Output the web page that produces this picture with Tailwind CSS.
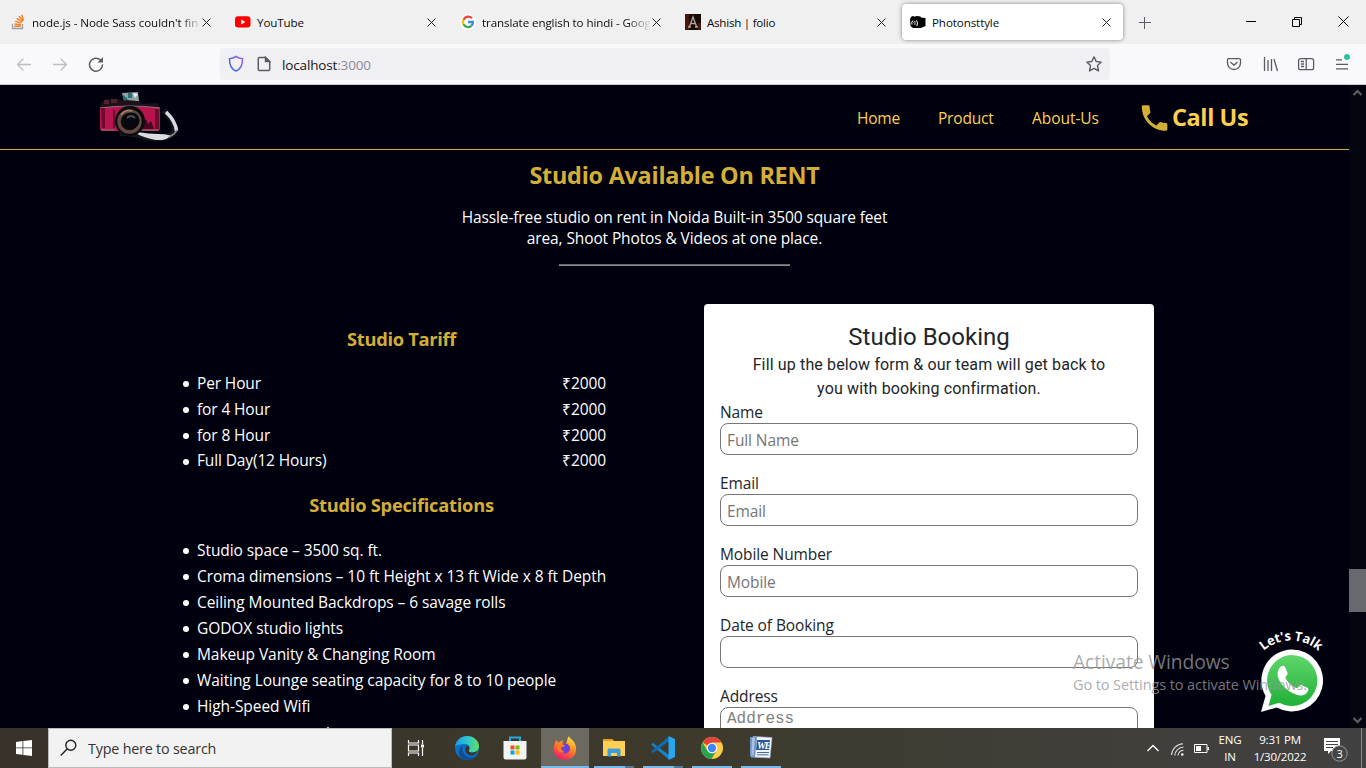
<!DOCTYPE html>
<html lang="en">
<head>
<meta charset="utf-8">
<title>Photonsttyle</title>
<script src="https://cdn.jsdelivr.net/npm/@tailwindcss/browser@4"></script>
</head>
<body class="w-[1366px] h-[768px] overflow-hidden flex flex-col font-['Open_Sans',sans-serif] text-[15.5px] bg-[#00000f]">

<!-- Tab strip -->
<div class="h-[44px] shrink-0 bg-[#f0f0f0] flex pl-[2px] text-[11.6px] text-[#0c0c0d] relative">
  <div class="w-[225px] h-[44px] flex items-center pl-[9px] shrink-0">
    <svg class="w-4 h-4 shrink-0" viewBox="0 0 16 16" fill="none"><path d="M1.5 10v4.5h10V10" stroke="#9aa0a8" stroke-width="1.3"/><path d="M3.3 12.3h6.5M3.5 10l6.4.8M4.2 7.2l6 2M5.8 4.4l5.2 3.6M8 2.2l4 5M10.8.8l1.6 6" stroke="#f48024" stroke-width="1.4"/></svg>
    <div class="ml-[5px] pt-[1px] w-[169px] overflow-hidden whitespace-nowrap tracking-[-0.070px] [mask-image:linear-gradient(to_right,black_148px,transparent_170px)]">node.js - Node Sass couldn't fin</div>
    <svg class="w-[9px] h-[9px] ml-[1px] shrink-0" viewBox="0 0 9 9" stroke="#222" fill="none"><path d="M.5.5l8 8M8.500.5l-8 8"/></svg>
  </div>
  <div class="w-[225px] h-[44px] flex items-center pl-[8px] shrink-0">
    <svg class="w-4 h-4 shrink-0" viewBox="0 0 16 16"><rect x="0" y="2.200" width="15.500" height="11.300" rx="3" fill="#f00"/><path d="M6.200 5.400v5l4.200-2.500z" fill="#fff"/></svg>
    <div class="ml-[6px] pt-[1px] w-[169px] whitespace-nowrap tracking-[-0.1px]">YouTube</div>
    <svg class="w-[9px] h-[9px] ml-[1px] shrink-0" viewBox="0 0 9 9" stroke="#222" fill="none"><path d="M.5.5l8 8M8.500.5l-8 8"/></svg>
  </div>
  <div class="w-[225px] h-[44px] flex items-center pl-[8px] shrink-0">
    <svg class="w-4 h-4 shrink-0" viewBox="0 0 16 16"><circle cx="8" cy="8" r="8" fill="#fff"/><g fill="none" stroke-width="2.300"><path d="M12 4.300A5.100 5.100 0 0 0 3.500 5.700" stroke="#ea4335"/><path d="M3.500 5.600a5.100 5.100 0 0 0 0 4.800" stroke="#fbbc05"/><path d="M3.500 10.300a5.100 5.100 0 0 0 7.900 1.500" stroke="#34a853"/><path d="M11.300 11.900A5 5 0 0 0 13 8H8" stroke="#4285f4"/></g></svg>
    <div class="ml-[6px] pt-[1px] w-[169px] overflow-hidden whitespace-nowrap tracking-[-0.1px] [mask-image:linear-gradient(to_right,black_145px,transparent_170px)]">translate english to hindi - Goog</div>
    <svg class="w-[9px] h-[9px] ml-[1px] shrink-0" viewBox="0 0 9 9" stroke="#222" fill="none"><path d="M.5.5l8 8M8.500.5l-8 8"/></svg>
  </div>
  <div class="w-[225px] h-[44px] flex items-center pl-[8px] shrink-0">
    <svg class="w-4 h-4 shrink-0" viewBox="0 0 16 16" fill="none"><path fill="#180a05" d="M0 0h16v16H0z"/><path d="M0 0h4v16H0zM13 9h3v7h-3z" fill="#461b0b"/><path d="M3 13h3M10 13h3M4.500 12.500L8 3l3.500 9.500M6 9.500h4.500" stroke="#b1a59c" stroke-width="1.300"/></svg>
    <div class="ml-[6px] pt-[1px] w-[169px] whitespace-nowrap tracking-[-0.25px]">Ashish | folio</div>
    <svg class="w-[9px] h-[9px] ml-[1px] shrink-0" viewBox="0 0 9 9" stroke="#222" fill="none"><path d="M.5.5l8 8M8.500.5l-8 8"/></svg>
  </div>
  <div class="w-[221px] h-[36px] mt-[4px] flex items-center pl-[8px] shrink-0 bg-white rounded-[4px] shadow-[0_0_4px_rgba(0,0,0,0.45)]">
    <svg class="w-4 h-4 shrink-0" viewBox="0 0 16 16"><path d="M0 5l1.500-2.500 2-.5 1 .8L6.500 2l4 .5.500 1 4.500.5v8L11 14H3L.5 12z" fill="#000"/><path d="M3 6.500q-2 1.500-1 4M6.500 6.300q2 2.700.3 5.700" stroke="#fff" stroke-width="1" fill="none"/><path d="M3.500 8.500l1.500-1v3.500" stroke="#ddd" stroke-width=".9" fill="none"/></svg>
    <div class="ml-[6px] pt-[1px] w-[169px] whitespace-nowrap tracking-[-0.1px]">Photonsttyle</div>
    <svg class="w-[9px] h-[9px] ml-[1px] shrink-0" viewBox="0 0 9 9" stroke="#222" fill="none"><path d="M.5.5l8 8M8.500.5l-8 8"/></svg>
  </div>
  <svg class="w-[12px] h-[12px] mt-[17px] ml-[16px] shrink-0" viewBox="0 0 12 12" stroke="#5b5b66" fill="none"><path d="M0 5.500h12M5.500 0v12"/></svg>
  <svg class="w-[104px] h-[12px] mt-[16px] ml-[95px] shrink-0" viewBox="0 0 104 12" stroke="#000" fill="none"><path d="M0 5.500h10M46.500 3.500h7v7h-7zM48.500 3.500v-2h7v7h-2M92.500.5l10 10M102.500.5l-10 10"/></svg>
</div>

<!-- Toolbar -->
<div class="h-[41px] shrink-0 bg-[#f9f9fb] border-b border-[#ccccd1] flex items-center">
  <svg class="w-[96px] h-[16px] ml-[16px] shrink-0" viewBox="0 0 96 16" fill="none" stroke-width="1.300" stroke-linecap="round" stroke-linejoin="round"><path d="M14.500 8.500H1.500M7 3L1.500 8.500 7 14M37.500 8.500h13M45 3l5.500 5.500L45 14" stroke="#bdbdc2"/><path d="M86.500 9a6.500 6.500 0 1 1-2-5" stroke="#5b5b66" stroke-width="1.500"/><path d="M87 1v5.500h-5.500z" fill="#5b5b66"/></svg>
  <div class="ml-[108px] w-[890px] h-[32px] rounded-[4px] bg-[#f0f0f4] flex items-center shrink-0">
    <svg class="w-[16px] h-[18px] ml-[8px]" viewBox="0 0 16 18" fill="none"><defs><linearGradient id="sh" x1="0" y1="1" x2="1" y2="0"><stop stop-color="#2a6cd8"/><stop offset="1" stop-color="#a060f0"/></linearGradient></defs><path d="M8 1.500c2 1.300 4 2 6.500 2.200.2 6-1.500 10.300-6.500 12.300C3 14 1.300 9.700 1.500 3.700 4 3.500 6 2.800 8 1.500z" stroke="url(#sh)" stroke-width="1.500"/></svg>
    <svg class="w-[14px] h-[16px] ml-[13px]" viewBox="0 0 14 16" fill="none" stroke="#5b5b66" stroke-width="1.500"><path d="M8.500 1.500h-6q-1.200 0-1.200 1.200v10.600q0 1.200 1.200 1.200h9q1.200 0 1.200-1.200V5.500z"/><path d="M8.500 1.500v4h4z" fill="#5b5b66"/></svg>
    <div class="ml-[11px] pt-[2px] text-[13.500px] tracking-[-0.15px] text-[#15141a] w-[804px]">localhost<span class="text-[#8a8a92]">:3000</span></div>
    <svg class="w-[16px] h-[16px] shrink-0" viewBox="0 0 16 16" fill="none" stroke="#5b5b66" stroke-width="1.400" stroke-linejoin="round"><path d="M8 .8l2.200 4.700 5 .6-3.700 3.500 1 5.300L8 12.400l-4.500 2.500 1-5.300L.8 6.100l5-.6z"/></svg>
  </div>
  <svg class="w-[124px] h-[20px] ml-[116px] mb-[2px] shrink-0" viewBox="0 0 124 20" fill="none" stroke="#5b5b66" stroke-width="1.300"><path d="M2.500 5.700h11q1 0 1 1V10a6.500 6.500 0 0 1-13 0V6.700q0-1 1-1zM4.500 9L8 12.200 11.500 9" stroke-linejoin="round"/><path d="M38.500 4v14M42 7v11M45.500 6v12M48 6l3.500 12"/><rect x="72.600" y="5.700" width="15" height="11" rx="2"/><path d="M80.200 6v11M75 8.500h3M75 11h3M75 13.500h3M110 6.800h6M110 11.300h12M110 15.800h12"/><circle cx="121" cy="4" r="3" fill="#2ac3a2" stroke="none"/></svg>
</div>

<!-- Web page -->
<div class="h-[643px] shrink-0 flex overflow-hidden relative">
  <div class="w-[1349px] h-full flex flex-col text-white">
    <header class="h-[65px] shrink-0 border-b border-[#d4af37] flex text-[#ffcf50]">
      <svg class="w-[84px] h-[54px] ml-[97px] mt-[5px]" viewBox="0 0 84 54"><path d="M67 20q8 8 11 18 0 7-9 9-8 3-20 0-14-4-26-4" fill="none" stroke="#15151c" stroke-width="6"/><path d="M69 22q9.500 9 10.500 19" fill="none" stroke="#d9dde0" stroke-width="3.500"/><path d="M72 46q-4 4-13 3-9-1-19-6 12 2 22 2 6 0 10 1z" fill="#d9dde0" stroke="#d9dde0" stroke-width="1.800"/><path d="M80 40l-3 4-5 3" stroke="#8d9298" stroke-width="1.500" fill="none"/><path d="M25 3l16-1 1 9-14 2z" fill="#8da3a4"/><path d="M25 4l6 5-4 3zM31 3h4v5h-4z" fill="#2a706f"/><path d="M36 3l5 1-3 4z" fill="#eef"/><path d="M4 13l5-4h12l4 2 5-1 10 1 6 3 15-1 1 5H3z" fill="#20101a"/><path d="M7 10h5v4H7zM14 9h6v4h-6z" fill="#4d242b"/><rect x="3" y="17" width="60" height="24" rx="3" fill="#b8134d"/><path d="M3 18q30-4 60 0" stroke="#8b7681" fill="none"/><path d="M4 18h4v20H5zM58 19h4v20h-4zM16 20h2v18h-2z" fill="#6d0c2d"/><path d="M46 33l3-4 2 5 3-3 3 8H44z" fill="#450820"/><path d="M4 40h14M45 40h17" stroke="#9a5563" stroke-width="1.500"/><circle cx="33" cy="31" r="15" fill="#0c0a10"/><circle cx="32.500" cy="31.500" r="10.500" fill="none" stroke="#634a3e" stroke-width="3.500"/><path d="M24 25q4-6 11-4" stroke="#a3816e" stroke-width="1.500" fill="none"/><circle cx="34.500" cy="30.500" r="8" fill="#07070e"/><path d="M30 28q4-4 8 0" stroke="#4b4c56" stroke-width="2" fill="none"/></svg>
      <nav class="ml-[676px] h-[68px] flex items-center">
        <a class="w-[81px] whitespace-nowrap tracking-[-0.2px]">Home</a>
        <a class="w-[94px] whitespace-nowrap tracking-[-0.2px]">Product</a>
        <a class="w-[107px] whitespace-nowrap tracking-[-0.05px]">About-Us</a>
      </nav>
      <svg class="w-[34px] h-[34px] mt-[15.500px] shrink-0" viewBox="0 0 24 24" fill="#d4af37"><path transform="translate(-1 0)" d="M6.620 10.790c1.440 2.830 3.760 5.140 6.590 6.590l2.200-2.200c.27-.27.67-.36 1.020-.24 1.120.37 2.330.57 3.570.57.55 0 1 .45 1 1V20c0 .55-.45 1-1 1-9.390 0-17-7.610-17-17 0-.55.45-1 1-1h3.500c.55 0 1 .45 1 1 0 1.250.2 2.450.57 3.570.11.35.03.74-.25 1.020l-2.200 2.200z"/></svg>
      <div class="-ml-[1px] h-[65px] flex items-center font-bold text-[23.500px] tracking-[-0.4px] whitespace-nowrap">Call Us</div>
    </header>

    <section class="flex flex-col items-center">
      <h1 class="mt-[8px] h-[34px] leading-[34px] font-bold text-[23.400px] tracking-[-0.240px] text-[#d4af37] whitespace-nowrap">Studio Available On RENT</h1>
      <p class="mt-[15px] text-center leading-[21px] tracking-[-0.120px] whitespace-nowrap">Hassle-free studio on rent in Noida Built-in 3500 square feet<br>area, Shoot Photos &amp; Videos at one place.</p>
      <div class="mt-[15px] w-[231px] h-[2px] border-t border-[#6a6a6a] bg-[#8c8c8c]"></div>
    </section>

    <div class="flex mt-[38px]">
      <section class="ml-[183px] w-[423px] shrink-0">
        <h3 class="mt-[22px] ml-[14px] h-[26px] leading-[26px] text-center font-bold text-[18.300px] tracking-[-0.310px] text-[#d4af37]">Studio Tariff</h3>
        <ul class="mt-[19px] leading-[25.800px] tracking-[-0.130px]">
          <li class="flex items-center gap-[8px]"><span class="w-[6px] h-[6px] mt-px rounded-full bg-white"></span><span class="grow">Per Hour</span><span class="tracking-[-0.1px]">₹2000</span></li>
          <li class="flex items-center gap-[8px]"><span class="w-[6px] h-[6px] mt-px rounded-full bg-white"></span><span class="grow">for 4 Hour</span><span class="tracking-[-0.1px]">₹2000</span></li>
          <li class="flex items-center gap-[8px]"><span class="w-[6px] h-[6px] mt-px rounded-full bg-white"></span><span class="grow">for 8 Hour</span><span class="tracking-[-0.1px]">₹2000</span></li>
          <li class="flex items-center gap-[8px]"><span class="w-[6px] h-[6px] mt-px rounded-full bg-white"></span><span class="grow">Full Day(12 Hours)</span><span class="tracking-[-0.1px]">₹2000</span></li>
        </ul>
        <h3 class="mt-[16.800px] ml-[14px] h-[27px] leading-[27px] text-center font-bold text-[18.300px] tracking-[-0.240px] text-[#d4af37]">Studio Specifications</h3>
        <ul class="mt-[19px] leading-[26px] tracking-[-0.070px] whitespace-nowrap">
          <li class="flex items-center gap-[8px]"><span class="w-[6px] h-[6px] mt-[2px] rounded-full bg-white"></span>Studio space – 3500 sq. ft.</li>
          <li class="flex items-center gap-[8px]"><span class="w-[6px] h-[6px] mt-[2px] shrink-0 rounded-full bg-white"></span>Croma dimensions – 10 ft Height x 13 ft Wide x 8 ft Depth</li>
          <li class="flex items-center gap-[8px]"><span class="w-[6px] h-[6px] mt-[2px] rounded-full bg-white"></span>Ceiling Mounted Backdrops – 6 savage rolls</li>
          <li class="flex items-center gap-[8px]"><span class="w-[6px] h-[6px] mt-[2px] rounded-full bg-white"></span>GODOX studio lights</li>
          <li class="flex items-center gap-[8px]"><span class="w-[6px] h-[6px] mt-[2px] rounded-full bg-white"></span>Makeup Vanity &amp; Changing Room</li>
          <li class="flex items-center gap-[8px]"><span class="w-[6px] h-[6px] mt-[2px] rounded-full bg-white"></span>Waiting Lounge seating capacity for 8 to 10 people</li>
          <li class="flex items-center gap-[8px]"><span class="w-[6px] h-[6px] mt-[2px] rounded-full bg-white"></span>High-Speed Wifi</li>
        </ul>
        <div class="ml-[144px] mt-[8px] w-[2px] h-[2px] bg-white/80"></div>
      </section>

      <form class="ml-[98px] w-[450px] h-[500px] shrink-0 rounded-[4px] bg-white px-[16px] text-[#212529] tracking-[-0.1px]">
        <h2 class="mt-[18px] h-[31px] leading-[30px] text-center font-['Roboto'] text-[24px] tracking-normal">Studio Booking</h2>
        <p class="h-[47px] text-center font-['Roboto'] text-[16px] leading-[24px] tracking-[0.140px]">Fill up the below form &amp; our team will get back to<br>you with booking confirmation.</p>
        <label class="block h-[23px] leading-[24px]">Name</label>
        <div class="h-[32px] rounded-[8px] border border-[#767676] px-[6px] leading-[33px] text-[#757575]">Full Name</div>
        <label class="block mt-[16px] h-[23px] leading-[24px]">Email</label>
        <div class="h-[32px] rounded-[8px] border border-[#767676] px-[6px] leading-[33px] text-[#757575]">Email</div>
        <label class="block mt-[16px] h-[23px] leading-[24px]">Mobile Number</label>
        <div class="h-[32px] rounded-[8px] border border-[#767676] px-[6px] leading-[33px] text-[#757575]">Mobile</div>
        <label class="block mt-[16px] h-[23px] leading-[24px]">Date of Booking</label>
        <div class="h-[32px] rounded-[8px] border border-[#767676]"></div>
        <label class="block mt-[16px] h-[23px] leading-[24px]">Address</label>
        <div class="h-[60px] rounded-[8px] border border-[#767676] px-[6px] leading-[22px] text-[16px] tracking-normal font-['Liberation_Mono',monospace] text-[#808080]">Address</div>
      </form>
    </div>
  </div>

  <!-- Scrollbar -->
  <div class="w-[17px] h-full shrink-0 bg-[#05050f] flex flex-col items-center">
    <svg class="w-[17px] h-[17px]" viewBox="0 0 17 17" fill="none" stroke="#606068" stroke-width="2"><path d="M4.500 10L8.500 6l4 4"/></svg>
    <div class="mt-[467px] w-full h-[43px] bg-[#68686f]"></div>
    <svg class="w-[17px] h-[17px] mt-auto" viewBox="0 0 17 17" fill="none" stroke="#606068" stroke-width="2"><path d="M4.500 7l4 4 4-4"/></svg>
  </div>

  <!-- Floating WhatsApp button -->
  <svg class="absolute left-[1254px] top-[540px] w-[76px] h-[92px]" viewBox="0 0 76 92">
    <defs><linearGradient id="wa" x1="0" y1="0" x2="0" y2="1"><stop stop-color="#60d66a"/><stop offset="1" stop-color="#20b038"/></linearGradient><path id="arc" d="M-4 56.500A41 41 0 0 1 78 56.500"/></defs>
    <path d="M37.800 24.500a31 31 0 1 1-15 58L7 87l4.500-16A31 31 0 0 1 37.800 24.500z" fill="#fff"/>
    <path d="M37.800 30a25.500 25.500 0 1 1-12.500 47.700L14.500 81l3-11.200A25.500 25.500 0 0 1 37.800 30z" fill="url(#wa)"/>
    <path d="M27 41.500c1.500-1 3-1 4 .5l2.600 6c.5 1.500-2.500 4-2.300 4.700 2.500 5 6.500 8.500 11.500 10.500 1 .3 3-3.700 4.500-3.300l6.500 3.200c1.500 1-.2 5-2.800 6.400-4 2-9 .8-14-2.200-6-3.600-10.500-8.800-12.500-13.500-1.700-4.500-.7-9.800 2.500-12.300z" fill="#fff"/>
    <text font-family="Open Sans" font-weight="700" font-size="13" letter-spacing="-.15" fill="#fff" text-anchor="middle"><textPath href="#arc" startOffset="50%">Let's Talk</textPath></text>
  </svg>

  <!-- Activation notice -->
  <div class="absolute left-[1073px] top-[564px] text-[#969698]/80 whitespace-nowrap">
    <div class="text-[19.300px] leading-[26px] tracking-[-0.1px]">Activate Windows</div>
    <div class="text-[14.500px] leading-[20px] tracking-[-0.1px]">Go to Settings to activate Windows.</div>
  </div>
</div>

<!-- Taskbar -->
<div class="h-[40px] shrink-0 flex bg-linear-to-r from-[#383128] via-[#3d3a2c] to-[#424141]">
  <div class="w-[48px] h-full flex items-center justify-center"><svg class="w-4 h-4" viewBox="0 0 16 16" fill="#fff"><path d="M0 2l6.500-.9v6.400H0zM7.300 1L16 0v7.500H7.300zM0 8.300h6.500v6.500L0 14zM7.300 8.300H16V16l-8.700-1.100z"/></svg></div>
  <div class="w-[344px] h-full bg-[#f2f2f2] border border-[#bcbcbc] flex items-center">
    <svg class="w-[18px] h-[18px] ml-[11px]" viewBox="0 0 18 18" fill="none" stroke="#222" stroke-width="1.400"><circle cx="10.800" cy="6.200" r="5"/><path d="M7.300 9.800L.8 16.500"/></svg>
    <span class="ml-[10px] pt-[1px] text-[14.300px] tracking-[-0.180px] text-[#333]">Type here to search</span>
  </div>
  <div class="w-[49px] flex items-center justify-center"><svg class="w-[18px] h-[16px] mr-[2px]" viewBox="0 0 18 16" fill="none" stroke="#fff" stroke-width="1.200"><path d="M1.500 0v3h10V0M1.500 16v-3h10v3M1.500 5h10v6h-10zM15.500 0v4M15.500 8v8"/><path d="M14 4.500h3v3h-3z" fill="#fff" stroke="none"/></svg></div>
  <div class="w-[52px] flex items-center justify-center"><svg class="w-6 h-6" viewBox="0 0 24 24"><defs><linearGradient id="e1"><stop stop-color="#1b9de2"/><stop offset=".5" stop-color="#2bc3d2"/><stop offset="1" stop-color="#66e05a"/></linearGradient></defs><circle cx="12" cy="12" r="12" fill="#0c6fc8"/><path d="M0 11C1 4 6 0 12 0c7 0 12 5 12 10 0 4-3 6.500-6.500 6.500-3 0-4.500-1-3.500-2.500 1.500-2 .5-6-4-6-5 0-9 1-10 3z" fill="url(#e1)"/><path d="M8 10c-2 7 3 12 9 11.500 2-.2 4-1 5-2C19 24 13 25 9 23.500 2 21 3 11.500 8 10z" fill="#124c91"/><path d="M14 14c-1 1.500.5 2.500 3.500 2.500 2 0 4-1 5-2-1 3-3 5-6 5-5 0-7-4-6-8 .5-2 3-2.500 3.500-.5.400 1 .5 2 0 3z" fill="#38372d"/></svg></div>
  <div class="w-[48px] flex items-center justify-center"><svg class="w-[24px] h-[24px] mr-[4px]" viewBox="0 0 24 24"><path d="M7 6V1.500h10V6" fill="none" stroke="#29a8e0" stroke-width="2"/><path d="M.5 5h23v16.500q0 2-2 2h-19q-2 0-2-2z" fill="#f3f3f3"/><path fill="#f25022" d="M7.500 9.500h4v4h-4z"/><path fill="#7fba00" d="M12.500 9.500h4v4h-4z"/><path fill="#00a4ef" d="M7.500 14.500h4v4h-4z"/><path fill="#ffb900" d="M12.500 14.500h4v4h-4z"/></svg></div>
  <div class="w-[48px] flex flex-col items-center bg-[#6c6a60] border-b-2 border-[#76b9ed]"><svg class="w-6 h-6 mt-[8px]" viewBox="0 0 24 24"><defs><linearGradient id="ff" x1=".8" y1="0" x2=".3" y2="1"><stop stop-color="#fff04a"/><stop offset=".45" stop-color="#ff8a1e"/><stop offset="1" stop-color="#f5156c"/></linearGradient></defs><path d="M3 4l2.500 2.500L10 4l-1 3.500 4 .5c1-3 1-5 3-8 0 2 4 4 5 6 3 5 3 11-1 15-4 3.500-12 3.500-16 0C0 18 0 11 2 7z" fill="url(#ff)"/><circle cx="12" cy="12.500" r="5" fill="#6b3fd8"/><path d="M4 8q5-1 8 1.500-1 2-4 2 0 3 4 4.500-5 2-8-3z" fill="#ff7c22"/></svg></div>
  <div class="w-[49px] flex flex-col items-center"><svg class="w-[22px] h-[19px] mt-[10px]" viewBox="0 0 22 19"><path d="M0 1h9l2 2h11v15H0z" fill="#ffcf56"/><path d="M0 1h9l1 2H0z" fill="#e5a00d"/><path d="M4.500 18.500v-6.500q0-1.500 1.500-1.500h10q1.500 0 1.500 1.500v6.500H14V15H8v3.500z" fill="#3e9bdd"/></svg><div class="mt-auto flex w-[40px] h-[2px]"><div class="w-[31px] bg-[#76b9ed]"></div><div class="w-[9px] bg-[#527a96]"></div></div></div>
  <div class="w-[49px] flex flex-col items-center"><svg class="w-6 h-6 mt-[8px]" viewBox="0 0 24 24"><path d="M0 8.500L2 7l16 12v4.500z" fill="#1782cc"/><path d="M0 15.500L2 17 18 5V.5z" fill="#0f6cb0"/><path d="M17.500 0L24 3v18l-6.500 3z" fill="#2aa5f0"/></svg><div class="mt-auto flex w-[40px] h-[2px]"><div class="w-[31px] bg-[#76b9ed]"></div><div class="w-[9px] bg-[#527a96]"></div></div></div>
  <div class="w-[49px] flex flex-col items-center"><svg class="w-[22px] h-[22px] mt-[9px]" viewBox="0 0 22 22"><circle cx="11" cy="11" r="11" fill="#fc4"/><path d="M11 11L1.500 5.500A11 11 0 0 1 20.500 5.500H11z" fill="#e0443a"/><path d="M1.500 5.500A11 11 0 0 0 10.500 22l5-8.500H6.200z" fill="#2ba24c"/><circle cx="11" cy="11" r="5.300" fill="#fff"/><circle cx="11" cy="11" r="4.200" fill="#4285f4"/></svg><div class="mt-auto w-[40px] h-[2px] bg-[#76b9ed]"></div></div>
  <div class="w-[49px] flex flex-col items-center"><svg class="w-[24px] h-[24px] mt-[8px]" viewBox="0 0 24 24"><path d="M4 .5l19 1-2 20.500-19-1z" fill="#f2f5fa" stroke="#9db4d6" stroke-width=".6"/><path d="M1 1h7L6 21.500 1 20z" fill="#6f93c6"/><path d="M3 2l3-.5-1.500 18-2-.5z" fill="#a9c1e2"/><path d="M8 4h13l-1 10H7z" fill="#2b579a"/><text x="8" y="12.500" font-family="Liberation Serif" font-weight="700" font-style="italic" font-size="10" letter-spacing="-1.500" fill="#fff">WE</text><path d="M8 16.500h12M8 18.800h11.500" stroke="#48679a"/></svg><div class="mt-auto w-[40px] h-[2px] bg-[#76b9ed]"></div></div>
  <div class="ml-auto w-[581px] h-full flex items-center text-white text-[11.500px] tracking-[-0.2px]">
    <svg class="w-[12px] h-[8px] ml-[362px] shrink-0" viewBox="0 0 12 8" fill="none" stroke="#fff" stroke-width="1.300"><path d="M.5 7L6 1.500 11.500 7"/></svg>
    <svg class="w-[13px] h-[13px] ml-[12px] mt-[2px] shrink-0" viewBox="0 0 13 13" fill="none" stroke="#ddd" stroke-width="1.100"><path d="M.6 12A12 12 0 0 1 12 .8M3.800 12.500A9 9 0 0 1 12.500 4M7 12.500A6 6 0 0 1 12.500 7.200"/><circle cx="11.300" cy="11.500" r="1.300" fill="#fff" stroke="none"/></svg>
    <svg class="w-[16px] h-[9px] ml-[10px] shrink-0" viewBox="0 0 16 9" fill="none" stroke="#fff"><path d="M.5.5h12.500v8H.5z"/><path d="M2 2h5v5H2zM13.500 3h1.500v3h-1.500z" fill="#fff" stroke="none"/></svg>
    <div class="ml-[5px] w-[30px] text-center leading-[17px] shrink-0">ENG<br>IN</div>
    <div class="ml-[7px] w-[56px] flex flex-col items-center whitespace-nowrap leading-[17px] shrink-0"><span>9:31 PM</span><span>1/30/2022</span></div>
    <svg class="w-[26px] h-[26px] ml-[15px] mt-[4px] shrink-0" viewBox="0 0 26 26"><path d="M1 1h16v13H8l-3 3v-3H1z" fill="#fff"/><path d="M3 4.500h12M3 7.500h12M3 10.500h7" stroke="#444"/><circle cx="16.500" cy="16.500" r="7.700" fill="#454443" stroke="#999"/><text x="16.500" y="20.500" text-anchor="middle" font-family="Open Sans" font-size="11" fill="#fff">3</text></svg>
    <div class="ml-auto mr-[4px] w-[1px] h-full bg-[#8a8a8a]"></div>
  </div>
</div>
</body>
</html>
